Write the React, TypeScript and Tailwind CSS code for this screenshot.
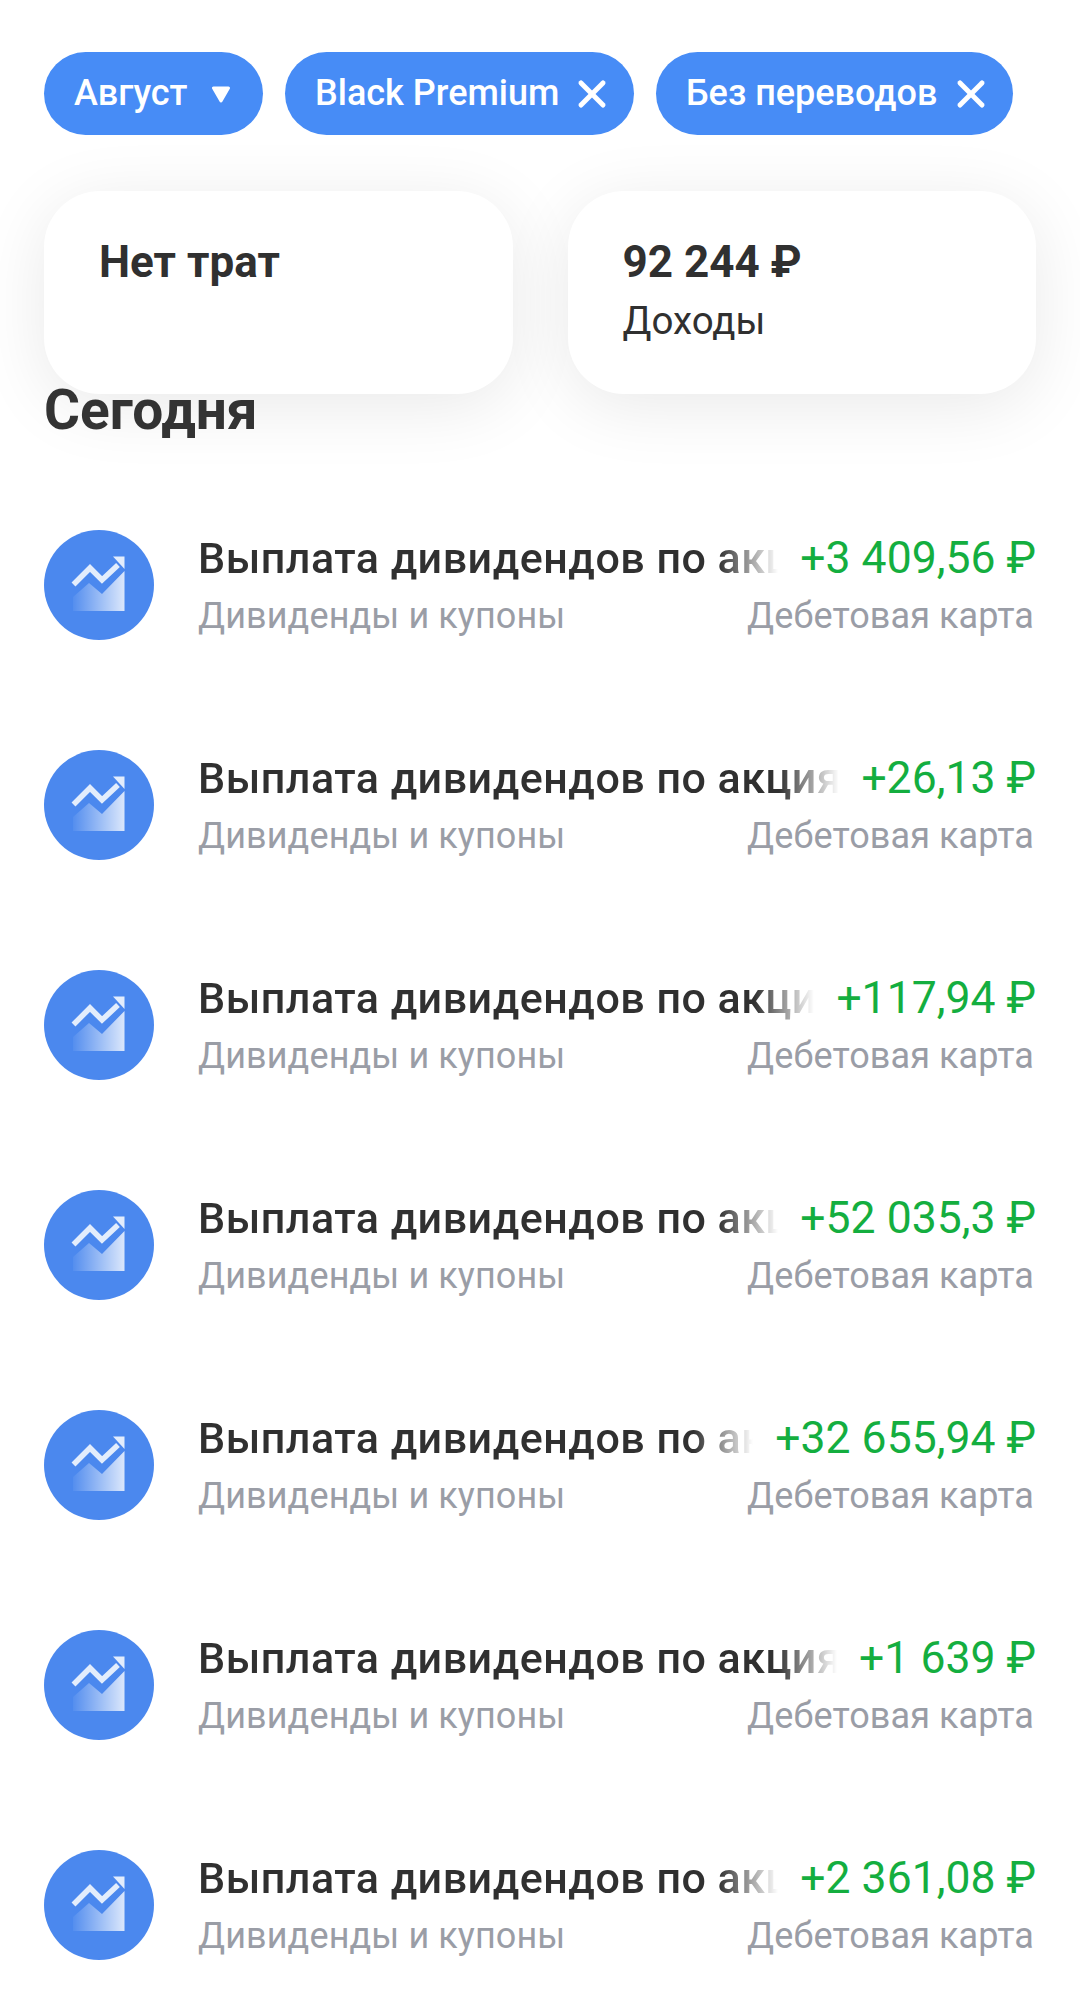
import { X } from 'lucide-react';

const rows = ['+3 409,56 ₽', '+26,13 ₽', '+117,94 ₽', '+52 035,3 ₽', '+32 655,94 ₽', '+1 639 ₽', '+2 361,08 ₽'];

function ChartIcon({ id }: { id: string }) {
  return (
    <svg width="110" height="110" viewBox="0 0 110 110" className="shrink-0">
      <defs>
        <linearGradient id={id} x1="0" y1="0" x2="1" y2="0">
          <stop offset="0" stopColor="#fff" stopOpacity="0.05" />
          <stop offset="1" stopColor="#fff" stopOpacity="0.8" />
        </linearGradient>
      </defs>
      <circle cx="55" cy="55" r="55" fill="#4b88ee" />
      <path d="M29 67 L45 53 L58 64 L80.5 41 V81 H29 Z" fill={`url(#${id})`} />
      <path d="M29.5 54.5 L46 38 L58 50 L74 35" fill="none" stroke="#e3edfc" strokeWidth="5.5" />
      <path d="M69 26.5 H80.5 V39 Z" fill="#e3edfc" />
    </svg>
  );
}

function Chip({ label, width, children }: { label: string; width: string; children: React.ReactNode }) {
  return (
    <div className={`flex h-[83px] items-center rounded-full bg-[#478cf6] pl-[30px] text-[36px] font-medium text-white ${width}`}>
      <span className="-mt-[1px] whitespace-nowrap">{label}</span>
      {children}
    </div>
  );
}

function Row({ amount, index }: { amount: string; index: number }) {
  return (
    <div className="flex h-[220px] items-center">
      <ChartIcon id={`fade-${index}`} />
      <div className="ml-[44px] min-w-0 flex-1 pt-[3px]">
        <div className="flex h-[58px] items-center">
          <div className="min-w-0 flex-1 overflow-hidden whitespace-nowrap text-[43px] font-medium tracking-[0.5px] text-[#303030] [mask-image:linear-gradient(to_left,transparent,black_60px)]">
            Выплата дивидендов по акциям
          </div>
          <div className="ml-[22px] shrink-0 whitespace-nowrap text-[44.5px] text-[#14ae3f]">{amount}</div>
        </div>
        <div className="flex justify-between pr-[2px] text-[36px] leading-[56px] tracking-[0.1px] text-[#9a9da6]">
          <span>Дивиденды и купоны</span>
          <span>Дебетовая карта</span>
        </div>
      </div>
    </div>
  );
}

export default function App() {
  return (
    <div className="h-[1994px] overflow-hidden bg-white px-[44px] pt-[52px] font-['Roboto',sans-serif]">
      <div className="flex gap-[22px]">
        <Chip label="Август" width="w-[219px]">
          <svg width="20" height="17" viewBox="0 0 20 17" className="ml-[23px] mt-[2px]">
            <path d="M2.5 2 H17.5 L10 15 Z" fill="#fff" stroke="#fff" strokeWidth="3" strokeLinejoin="round" />
          </svg>
        </Chip>
        <Chip label="Black Premium" width="w-[349px]">
          <X size={44} strokeWidth={2.7} className="ml-[11px]" />
        </Chip>
        <Chip label="Без переводов" width="w-[357px]">
          <X size={44} strokeWidth={2.7} className="ml-[12px]" />
        </Chip>
      </div>
      <div className="mt-[56px] grid grid-cols-2 gap-[55px]">
        <div className="h-[203px] rounded-[56px] bg-white px-[55px] pt-[46px] shadow-[0_12px_70px_rgba(0,0,0,0.09)]">
          <div className="text-[44px] leading-[50px] font-bold text-[#303030]">Нет трат</div>
        </div>
        <div className="h-[203px] rounded-[56px] bg-white px-[55px] pt-[46px] shadow-[0_12px_70px_rgba(0,0,0,0.09)]">
          <div className="text-[44px] leading-[50px] font-bold text-[#303030]">92 244 ₽</div>
          <div className="mt-[9px] text-[38.5px] leading-[50px] text-[#303030]">Доходы</div>
        </div>
      </div>
      <h2 className="relative -mt-[14px] text-[55px] leading-[60px] font-bold text-[#333]">Сегодня</h2>
      <div className="mt-[35px]">
        {rows.map((amount, i) => (
          <Row key={i} amount={amount} index={i} />
        ))}
      </div>
    </div>
  );
}
